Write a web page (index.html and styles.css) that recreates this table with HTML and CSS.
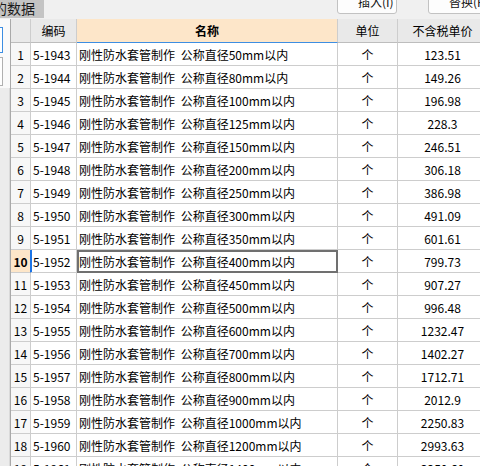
FILE: index.html
```html
<!DOCTYPE html>
<html>
<head>
<meta charset="utf-8">
<link rel="stylesheet" href="styles.css">
</head>
<body>
<div class="app">
  <div class="topbar">
    <div class="tab"><span class="tab-text">的数据</span></div>
    <div class="btn btn-insert">插入(I)</div>
    <div class="btn btn-replace">替换(R)</div>
  </div>
  <div class="main">
    <div class="side">
      <div class="side-top">
        <div class="side-box active"></div>
        <div class="side-box"></div>
      </div>
      <div class="side-bottom"></div>
    </div>
    <div class="grid">
      <div class="row head">
        <div class="c num"></div>
        <div class="c code">编码</div>
        <div class="c name sel">名称</div>
        <div class="c unit">单位</div>
        <div class="c price">不含税单价</div>
      </div>
      <div class="row"><div class="c num">1</div><div class="c code">5-1943</div><div class="c name">刚性防水套管制作 公称直径50mm以内</div><div class="c unit">个</div><div class="c price">123.51</div></div>
      <div class="row"><div class="c num">2</div><div class="c code">5-1944</div><div class="c name">刚性防水套管制作 公称直径80mm以内</div><div class="c unit">个</div><div class="c price">149.26</div></div>
      <div class="row"><div class="c num">3</div><div class="c code">5-1945</div><div class="c name">刚性防水套管制作 公称直径100mm以内</div><div class="c unit">个</div><div class="c price">196.98</div></div>
      <div class="row"><div class="c num">4</div><div class="c code">5-1946</div><div class="c name">刚性防水套管制作 公称直径125mm以内</div><div class="c unit">个</div><div class="c price">228.3</div></div>
      <div class="row"><div class="c num">5</div><div class="c code">5-1947</div><div class="c name">刚性防水套管制作 公称直径150mm以内</div><div class="c unit">个</div><div class="c price">246.51</div></div>
      <div class="row"><div class="c num">6</div><div class="c code">5-1948</div><div class="c name">刚性防水套管制作 公称直径200mm以内</div><div class="c unit">个</div><div class="c price">306.18</div></div>
      <div class="row"><div class="c num">7</div><div class="c code">5-1949</div><div class="c name">刚性防水套管制作 公称直径250mm以内</div><div class="c unit">个</div><div class="c price">386.98</div></div>
      <div class="row"><div class="c num">8</div><div class="c code">5-1950</div><div class="c name">刚性防水套管制作 公称直径300mm以内</div><div class="c unit">个</div><div class="c price">491.09</div></div>
      <div class="row"><div class="c num">9</div><div class="c code">5-1951</div><div class="c name">刚性防水套管制作 公称直径350mm以内</div><div class="c unit">个</div><div class="c price">601.61</div></div>
      <div class="row current"><div class="c num">10</div><div class="c code">5-1952</div><div class="c name">刚性防水套管制作 公称直径400mm以内</div><div class="c unit">个</div><div class="c price">799.73</div></div>
      <div class="row"><div class="c num">11</div><div class="c code">5-1953</div><div class="c name">刚性防水套管制作 公称直径450mm以内</div><div class="c unit">个</div><div class="c price">907.27</div></div>
      <div class="row"><div class="c num">12</div><div class="c code">5-1954</div><div class="c name">刚性防水套管制作 公称直径500mm以内</div><div class="c unit">个</div><div class="c price">996.48</div></div>
      <div class="row"><div class="c num">13</div><div class="c code">5-1955</div><div class="c name">刚性防水套管制作 公称直径600mm以内</div><div class="c unit">个</div><div class="c price">1232.47</div></div>
      <div class="row"><div class="c num">14</div><div class="c code">5-1956</div><div class="c name">刚性防水套管制作 公称直径700mm以内</div><div class="c unit">个</div><div class="c price">1402.27</div></div>
      <div class="row"><div class="c num">15</div><div class="c code">5-1957</div><div class="c name">刚性防水套管制作 公称直径800mm以内</div><div class="c unit">个</div><div class="c price">1712.71</div></div>
      <div class="row"><div class="c num">16</div><div class="c code">5-1958</div><div class="c name">刚性防水套管制作 公称直径900mm以内</div><div class="c unit">个</div><div class="c price">2012.9</div></div>
      <div class="row"><div class="c num">17</div><div class="c code">5-1959</div><div class="c name">刚性防水套管制作 公称直径1000mm以内</div><div class="c unit">个</div><div class="c price">2250.83</div></div>
      <div class="row"><div class="c num">18</div><div class="c code">5-1960</div><div class="c name">刚性防水套管制作 公称直径1200mm以内</div><div class="c unit">个</div><div class="c price">2993.63</div></div>
      <div class="row"><div class="c num">19</div><div class="c code">5-1961</div><div class="c name">刚性防水套管制作 公称直径1400mm以内</div><div class="c unit">个</div><div class="c price">3250.60</div></div>
    </div>
  </div>
</div>
</body>
</html>
```
FILE: styles.css
```css
html, body {
  margin: 0;
  padding: 0;
}
body {
  width: 480px;
  height: 466px;
  overflow: hidden;
  background: #f0f0f0;
  font-family: "Noto Sans CJK SC", "Liberation Sans", sans-serif;
  font-size: 12px;
  color: #000;
}
.app {
  width: 480px;
  height: 466px;
  overflow: hidden;
}
.topbar {
  height: 19px;
  display: flex;
  align-items: flex-start;
  background: #f0f0f0;
}
.tab {
  flex: none;
  width: 44px;
  height: 18px;
  background: #c4c4c4;
  overflow: hidden;
  white-space: nowrap;
  font-size: 14px;
  line-height: 17px;
  color: #1a1a1a;
}
.tab-text {
  display: inline-block;
  margin-left: -7px;
}
.btn {
  flex: none;
  box-sizing: border-box;
  height: 24px;
  margin-top: -10px;
  border: 1px solid #c2c2c2;
  border-radius: 3px;
  background: #fdfdfd;
  padding: 3px 0 0 20px;
  font-size: 12px;
  line-height: 16px;
  white-space: nowrap;
  overflow: hidden;
  color: #111;
}
.btn-insert {
  margin-left: 293px;
  width: 60px;
}
.btn-replace {
  margin-left: 31px;
  width: 70px;
}
.main {
  display: flex;
  height: 447px;
}
.side {
  flex: none;
  width: 10px;
  display: flex;
  flex-direction: column;
}
.side-top {
  height: 69px;
  background: #fafafa;
  display: flex;
  flex-direction: column;
}
.side-box {
  box-sizing: border-box;
  width: 6px;
  margin-left: -3px;
  height: 26px;
  margin-top: 8px;
  border: 1px solid #b0b0b0;
  background: #fff;
}
.side-box.active {
  height: 26px;
  border-color: #3d8ee2;
}
.side-box + .side-box {
  margin-top: 4px;
  height: 29px;
}
.side-bottom {
  flex: 1;
  background: #ececec;
  border-right: 1px solid #dadada;
}
.grid {
  flex: none;
  width: 480px;
  background: #fff;
  border-left: 1px solid #a9a9a9;
}
.row {
  display: grid;
  grid-template-columns: 20px 46px 261px 60px 90px;
  height: 23px;
}
.c {
  box-sizing: border-box;
  border-right: 1px solid #cdcdcd;
  border-bottom: 1px solid #cdcdcd;
  display: flex;
  align-items: center;
  white-space: nowrap;
  overflow: hidden;
}
.num {
  justify-content: center;
  background: #f7f7f7;
  font-size: 12px;
}
.code {
  padding-left: 2px;
}
.name {
  padding-left: 2px;
  word-spacing: 3px;
}
.unit, .price {
  justify-content: center;
}
.head {
  height: 24px;
}
.head .c {
  background: #e9e9e9;
  justify-content: center;
  padding: 0;
  border-bottom-color: #bdbdbd;
}
.head .name.sel {
  background: #fde6c9;
  font-weight: bold;
  border-bottom: 1px solid #3d8ee2;
}
.current .num {
  background: #fde6c9;
  font-weight: bold;
  border-right-color: #1c74e6;
}
.current .code {
  box-shadow: inset 1px 0 0 #1c74e6;
}
.current .name {
  outline: 2px solid #707070;
  outline-offset: -2px;
}
```
